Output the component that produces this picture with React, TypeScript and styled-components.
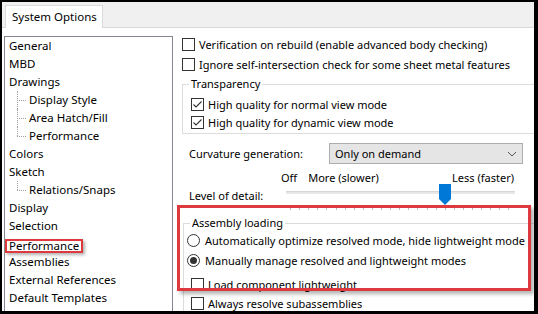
import React from "react";
import styled, { createGlobalStyle } from "styled-components";

const GlobalStyle = createGlobalStyle`
  html, body { margin: 0; padding: 0; background: #fff; }
  * { box-sizing: border-box; }
  body { font-family: "Noto Sans", "Open Sans", sans-serif; font-size: 11px; color: #000; }
`;

const Frame = styled.div`
  width: 538px;
  height: 314px;
  border-style: solid;
  border-color: #000;
  border-width: 2px 4px 3px 2px;
  background: #fff;
  overflow: hidden;
  display: flex;
  flex-direction: column;
`;

const TabStrip = styled.div`
  height: 26px;
  flex: none;
  background: #f0f0f0;
  border-bottom: 1px solid #dadada;
  display: flex;
  align-items: flex-end;
  padding-left: 3px;
`;

const Tab = styled.div`
  height: 23px;
  margin-bottom: -1px;
  background: #fff;
  border: 1px solid #dadada;
  border-bottom: none;
  padding: 0 5px 0 6px;
  line-height: 22px;
  font-size: 11.5px;
  white-space: nowrap;
`;

const Body = styled.div`
  flex: 1;
  min-height: 0;
  display: flex;
  overflow: hidden;
`;

const Tree = styled.div`
  flex: none;
  width: 169px;
  margin: 8px 0 0 2px;
  height: 300px;
  border: 1px solid #828790;
  overflow: hidden;
`;

const TreeRow = styled.div<{ $child?: boolean; $last?: boolean }>`
  position: relative;
  height: 18px;
  line-height: 18px;
  font-size: 11.5px;
  padding-left: ${(p) => (p.$child ? 24 : 4)}px;
  white-space: nowrap;
  ${(p) =>
    p.$child
      ? `
    &::before {
      content: "";
      position: absolute;
      left: 12px;
      top: 9px;
      width: 9px;
      border-top: 1px dotted #a0a0a0;
    }
    &::after {
      content: "";
      position: absolute;
      left: 12px;
      top: 0;
      height: ${p.$last ? 9 : 18}px;
      border-left: 1px dotted #a0a0a0;
    }
  `
      : ""}
`;

const Marked = styled.span`
  display: inline-block;
  height: 14px;
  line-height: 10px;
  border: 2px solid #dc3a3f;
  padding: 0 2px;
  margin-left: -4px;
  vertical-align: -2px;
  box-shadow: 2px 2px 3px rgba(0, 0, 0, 0.3);
`;

const Panel = styled.div`
  flex: 1;
  min-width: 0;
  padding: 6px 0 0 9px;
  display: flex;
  flex-direction: column;
  & > * {
    flex-shrink: 0;
  }
`;

const OptionRow = styled.div<{ $indent?: number; $h?: number; $gap?: number; $mt?: number }>`
  display: flex;
  align-items: center;
  height: ${(p) => p.$h ?? 20}px;
  margin-top: ${(p) => p.$mt ?? 0}px;
  padding-left: ${(p) => p.$indent ?? 0}px;
  gap: ${(p) => p.$gap ?? 4}px;
  white-space: nowrap;
`;

const Box = styled.span`
  flex: none;
  width: 13px;
  height: 13px;
  border: 1px solid #333;
  background: #fff;
  display: inline-flex;
  align-items: center;
  justify-content: center;
`;

const Round = styled.span`
  flex: none;
  width: 13px;
  height: 13px;
  border: 1px solid #333;
  border-radius: 50%;
  background: #fff;
  display: inline-flex;
  align-items: center;
  justify-content: center;
`;

const Dot = styled.span`
  width: 7px;
  height: 7px;
  border-radius: 50%;
  background: #333;
`;

const Group = styled.div<{ $ml?: number; $mt?: number }>`
  border: 1px solid #dcdcdc;
  margin: ${(p) => p.$mt ?? 0}px -20px 0 ${(p) => p.$ml ?? 0}px;
  padding-bottom: 2px;
`;

const Legend = styled.div`
  width: fit-content;
  height: 16px;
  line-height: 16px;
  margin: -9px 0 0 6px;
  padding: 0 2px;
  background: #fff;
  white-space: nowrap;
`;

const Highlight = styled.div`
  position: relative;
  &::after {
    content: "";
    position: absolute;
    left: -7px;
    top: -10px;
    width: 348px;
    height: 80px;
    border: 3px solid #dc3a3f;
    box-shadow: 3px 3px 4px rgba(0, 0, 0, 0.3);
    pointer-events: none;
  }
`;

const FieldRow = styled.div`
  display: flex;
  align-items: center;
  height: 21px;
  margin-top: 9px;
  padding-left: 7px;
`;

const FieldLabel = styled.div<{ $w: number }>`
  width: ${(p) => p.$w}px;
  flex: none;
  white-space: nowrap;
`;

const Select = styled.div`
  width: 194px;
  height: 21px;
  background: #e5e5e5;
  border: 1px solid #adadad;
  display: flex;
  align-items: center;
  justify-content: space-between;
  padding: 0 5px 0 5px;
`;

const ScaleLabels = styled.div`
  display: flex;
  align-items: center;
  height: 16px;
  margin-top: 5px;
  padding: 0 20px 0 99px;
  white-space: nowrap;
`;

const Spacer = styled.div`
  flex: 1;
`;

const SliderRow = styled.div`
  display: flex;
  align-items: flex-start;
  padding-left: 7px;
  height: 26px;
`;

const SliderLabel = styled.div`
  width: 97px;
  flex: none;
  line-height: 22px;
  white-space: nowrap;
`;

const SliderBox = styled.div`
  position: relative;
  width: 229px;
  height: 26px;
`;

const Track = styled.div`
  margin-top: 6px;
  height: 3px;
  background: #e7e7e7;
  border-top: 1px solid #d6d6d6;
`;

const Ticks = styled.div`
  margin: 13px 0 0 4px;
  height: 3px;
  background: repeating-linear-gradient(
    to right,
    #b8b8b8 0 1px,
    transparent 1px 9.1px
  );
`;

const Thumb = styled.svg`
  position: absolute;
  left: 153px;
  top: -1px;
`;

const Check = () => (
  <svg width="11" height="11" viewBox="0 0 11 11">
    <path d="M1.5 5.5 L4 8 L9.5 2.5" fill="none" stroke="#333" strokeWidth="1.1" />
  </svg>
);

const Chevron = () => (
  <svg width="10" height="6" viewBox="0 0 10 6">
    <path d="M1 1 L5 5 L9 1" fill="none" stroke="#555" strokeWidth="1" />
  </svg>
);

const treeItems: { label: string; child?: boolean; last?: boolean; marked?: boolean }[] = [
  { label: "General" },
  { label: "MBD" },
  { label: "Drawings" },
  { label: "Display Style", child: true },
  { label: "Area Hatch/Fill", child: true },
  { label: "Performance", child: true, last: true },
  { label: "Colors" },
  { label: "Sketch" },
  { label: "Relations/Snaps", child: true, last: true },
  { label: "Display" },
  { label: "Selection" },
  { label: "Performance", marked: true },
  { label: "Assemblies" },
  { label: "External References" },
  { label: "Default Templates" },
  { label: "File Locations" },
];

export default function App() {
  return (
    <>
      <GlobalStyle />
      <Frame>
        <TabStrip>
          <Tab>System Options</Tab>
        </TabStrip>
        <Body>
          <Tree>
            {treeItems.map((it, i) => (
              <TreeRow key={i} $child={it.child} $last={it.last}>
                {it.marked ? <Marked>{it.label}</Marked> : it.label}
              </TreeRow>
            ))}
          </Tree>
          <Panel>
            <OptionRow>
              <Box />
              <span>Verification on rebuild (enable advanced body checking)</span>
            </OptionRow>
            <OptionRow>
              <Box />
              <span>Ignore self-intersection check for some sheet metal features</span>
            </OptionRow>
            <Group $mt={10}>
              <Legend>Transparency</Legend>
              <OptionRow $indent={8} $h={18} $mt={3}>
                <Box>
                  <Check />
                </Box>
                <span>High quality for normal view mode</span>
              </OptionRow>
              <OptionRow $indent={8} $h={18}>
                <Box>
                  <Check />
                </Box>
                <span>High quality for dynamic view mode</span>
              </OptionRow>
            </Group>
            <FieldRow>
              <FieldLabel $w={140}>Curvature generation:</FieldLabel>
              <Select>
                <span>Only on demand</span>
                <Chevron />
              </Select>
            </FieldRow>
            <ScaleLabels>
              <span>Off</span>
              <span style={{ marginLeft: 11 }}>More (slower)</span>
              <Spacer />
              <span>Less (faster)</span>
            </ScaleLabels>
            <SliderRow>
              <SliderLabel>Level of detail:</SliderLabel>
              <SliderBox>
                <Track />
                <Ticks />
                <Thumb width="12" height="21" viewBox="0 0 12 21">
                  <path d="M0 0 H12 V15 L6 21 L0 15 Z" fill="#0078d7" />
                </Thumb>
              </SliderBox>
            </SliderRow>
            <Group $mt={12} $ml={1}>
              <Highlight>
                <Legend>Assembly loading</Legend>
                <OptionRow $indent={3} $gap={5} $mt={-1}>
                  <Round />
                  <span>Automatically optimize resolved mode, hide lightweight mode</span>
                </OptionRow>
                <OptionRow $indent={3} $gap={5}>
                  <Round>
                    <Dot />
                  </Round>
                  <span>Manually manage resolved and lightweight modes</span>
                </OptionRow>
                <OptionRow $indent={7} $h={16} $mt={6}>
                  <Box />
                  <span>Load component lightweight</span>
                </OptionRow>
              </Highlight>
              <OptionRow $indent={7} $h={19} $mt={2}>
                <Box />
                <span>Always resolve subassemblies</span>
              </OptionRow>
            </Group>
          </Panel>
        </Body>
      </Frame>
    </>
  );
}
